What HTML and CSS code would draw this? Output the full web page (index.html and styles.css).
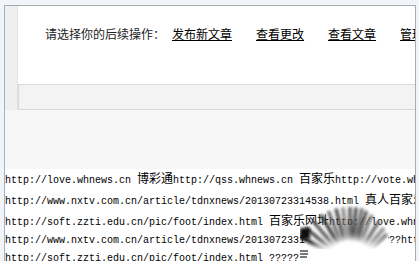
FILE: index.html
```html
<!DOCTYPE html>
<html lang="zh-CN">

<head>
    <meta charset="UTF-8">
    <title>操作完成</title>
    <link rel="stylesheet" href="styles.css">
</head>

<body>

    <div class="frame">
        <!-- Panel with next actions -->
        <div class="panel">
            <div class="side"></div>
            <div class="main">
                <div class="content">
                    <span class="label">请选择你的后续操作：</span>
                    <a href="#" class="action">发布新文章</a>
                    <a href="#" class="action">查看更改</a>
                    <a href="#" class="action">查看文章</a>
                    <a href="#" class="action">管理文章</a>
                </div>
                <div class="footbar"></div>
            </div>
        </div>

        <div class="spacer"></div>

        <!-- Link dump -->
        <div class="links">
            <div>http://love.whnews.cn <span class="zh">博彩通</span>http://qss.whnews.cn <span class="zh">百家乐</span>http://vote.whnews.cn</div>
            <div>http://www.nxtv.com.cn/article/tdnxnews/20130723314538.html <span class="zh">真人百家乐</span></div>
            <div>http://soft.zzti.edu.cn/pic/foot/index.html <span class="zh">百家乐网址</span>http://love.whnews.cn</div>
            <div>http://www.nxtv.com.cn/article/tdnxnews/20130723314538.html ??????http://</div>
            <div>http://soft.zzti.edu.cn/pic/foot/index.html ?????</div>

            <svg class="smudge" width="100" height="60" viewBox="0 0 100 60">
                <defs>
                    <filter id="blur" x="-20%" y="-20%" width="140%" height="140%">
                        <feGaussianBlur stdDeviation="1.4" />
                    </filter>
                    <filter id="soft" x="-40%" y="-40%" width="180%" height="180%">
                        <feGaussianBlur stdDeviation="4" />
                    </filter>
                </defs>
                <rect x="6" y="22" width="82" height="20" fill="#fff" />
                <g filter="url(#blur)">
                    <line x1="29" y1="50" x2="0" y2="33" stroke="#111" stroke-width="4" />
                    <line x1="31.6" y1="46.6" x2="5.6" y2="24.7" stroke="#444" stroke-width="3.5" />
                    <line x1="34.6" y1="43.6" x2="12.7" y2="17.6" stroke="#555" stroke-width="3.5" />
                    <line x1="38" y1="41.2" x2="21" y2="11.8" stroke="#333" stroke-width="3.5" />
                    <line x1="41" y1="39.8" x2="28.3" y2="8.2" stroke="#666" stroke-width="3.5" />
                    <line x1="44.2" y1="38.7" x2="36" y2="5.7" stroke="#444" stroke-width="3.5" />
                    <line x1="47.1" y1="38.2" x2="42.9" y2="4.4" stroke="#777" stroke-width="3" />
                    <line x1="50" y1="38" x2="50" y2="4" stroke="#555" stroke-width="3.5" />
                    <line x1="52.5" y1="38.1" x2="56.1" y2="4.3" stroke="#333" stroke-width="3" />
                    <line x1="55" y1="38.5" x2="62" y2="5.3" stroke="#666" stroke-width="3.5" />
                    <line x1="57.4" y1="39.2" x2="66.5" y2="8" stroke="#444" stroke-width="3" />
                    <line x1="60.2" y1="40.3" x2="72" y2="12" stroke="#777" stroke-width="3.5" />
                    <line x1="63.8" y1="42.3" x2="79" y2="18" stroke="#666" stroke-width="3.5" />
                    <line x1="67" y1="45" x2="84" y2="25" stroke="#888" stroke-width="3.5" />
                    <line x1="69.7" y1="48.2" x2="87" y2="31" stroke="#777" stroke-width="3.5" />
                </g>
                <rect x="0" y="25" width="10" height="11" fill="#111" filter="url(#blur)" />
                <circle cx="50" cy="62" r="28" fill="#fff" filter="url(#soft)" />
                <rect x="10" y="42" width="82" height="18" fill="#fff" filter="url(#soft)" />
                <rect x="12" y="46" width="78" height="14" fill="#fff" />
                <line x1="0" y1="48" x2="8" y2="48" stroke="#222" stroke-width="1.2" />
                <line x1="0" y1="51" x2="8" y2="51" stroke="#222" stroke-width="1.2" />
                <line x1="0" y1="54" x2="7" y2="54" stroke="#222" stroke-width="1.2" />
            </svg>
        </div>
    </div>

</body>

</html>
```

FILE: styles.css
```css
/* Page */
body {
    margin: 0;
    background-color: #f1f4f8;
    font-family: "Noto Sans CJK SC", sans-serif;
    font-size: 12px;
    color: #333;
    overflow: hidden;
}

.frame {
    box-sizing: border-box;
    width: 412px;
    margin: 5px 0 0 4px;
    border-top: 1px solid #a8acb2;
    border-left: 1px solid #a9b1bb;
    border-right: 1px solid #a8acb2;
    background-color: #f7f7f7;
    height: 256px;
    overflow: hidden;
}

/* Panel */
.panel {
    display: flex;
}

.side {
    flex-shrink: 0;
    width: 12px;
    background-color: #efefef;
    border-right: 1px solid #e2e2e2;
}

.main {
    flex: 1;
    min-width: 0;
}

.content {
    height: 78px;
    padding-left: 27px;
    background-color: #fff;
    display: flex;
    align-items: flex-start;
    line-height: 56px;
    white-space: nowrap;
    overflow: hidden;
}

.label {
    margin-right: 7px;
    color: #222;
}

.action {
    color: #000;
    text-decoration: underline;
    margin-right: 24px;
}

.footbar {
    height: 24px;
    background-color: #f3f3f3;
    border-top: 1px solid #dcdcdc;
    border-bottom: 1px solid #d6d6d6;
    border-left: 1px solid #d6d6d6;
}

.spacer {
    height: 59px;
}

/* Links */
.links {
    position: relative;
    background-color: #fff;
    font-family: "Liberation Mono", monospace;
    font-size: 10px;
    line-height: 18px;
    color: #000;
    white-space: nowrap;
    overflow: hidden;
    height: 92px;
}

.links .zh {
    font-family: "Noto Sans CJK SC", sans-serif;
    font-size: 12px;
    line-height: 18px;
}

.smudge {
    position: absolute;
    left: 295px;
    top: 34px;
}
```
